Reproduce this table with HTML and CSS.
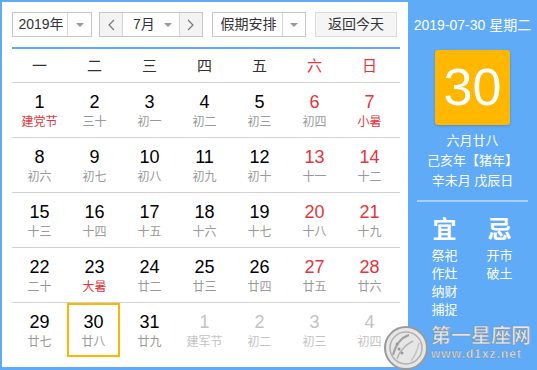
FILE: index.html
```html
<!DOCTYPE html>
<html lang="zh-CN">
<head>
<meta charset="utf-8">
<title>万年历</title>
<link rel="stylesheet" href="styles.css">
</head>
<body>
<div class="frame">
  <div class="main">
    <div class="toolbar">
      <div class="select year">
        <span class="sel-text">2019年</span>
        <span class="sel-arrow"><i class="tri"></i></span>
      </div>
      <div class="select month">
        <span class="nav"><svg width="8" height="12" viewBox="0 0 8 12"><polyline points="7,1 2,6 7,11" fill="none" stroke="#777" stroke-width="1.2"/></svg></span>
        <span class="sel-text mtext"><span>7月</span><i class="tri"></i></span>
        <span class="nav"><svg width="8" height="12" viewBox="0 0 8 12"><polyline points="1,1 6,6 1,11" fill="none" stroke="#777" stroke-width="1.2"/></svg></span>
      </div>
      <div class="select holiday">
        <span class="sel-text">假期安排</span>
        <span class="sel-arrow"><i class="tri"></i></span>
      </div>
      <div class="btn-today">返回今天</div>
    </div>

    <div class="calendar">
      <div class="row head">
        <span>一</span><span>二</span><span>三</span><span>四</span><span>五</span><span class="red">六</span><span class="red">日</span>
      </div>
      <div class="row">
        <div class="cell"><b class="num">1</b><span class="lunar red">建党节</span></div>
        <div class="cell"><b class="num">2</b><span class="lunar">三十</span></div>
        <div class="cell"><b class="num">3</b><span class="lunar">初一</span></div>
        <div class="cell"><b class="num">4</b><span class="lunar">初二</span></div>
        <div class="cell"><b class="num">5</b><span class="lunar">初三</span></div>
        <div class="cell wk"><b class="num">6</b><span class="lunar">初四</span></div>
        <div class="cell wk"><b class="num">7</b><span class="lunar red">小暑</span></div>
      </div>
      <div class="row">
        <div class="cell"><b class="num">8</b><span class="lunar">初六</span></div>
        <div class="cell"><b class="num">9</b><span class="lunar">初七</span></div>
        <div class="cell"><b class="num">10</b><span class="lunar">初八</span></div>
        <div class="cell"><b class="num">11</b><span class="lunar">初九</span></div>
        <div class="cell"><b class="num">12</b><span class="lunar">初十</span></div>
        <div class="cell wk"><b class="num">13</b><span class="lunar">十一</span></div>
        <div class="cell wk"><b class="num">14</b><span class="lunar">十二</span></div>
      </div>
      <div class="row">
        <div class="cell"><b class="num">15</b><span class="lunar">十三</span></div>
        <div class="cell"><b class="num">16</b><span class="lunar">十四</span></div>
        <div class="cell"><b class="num">17</b><span class="lunar">十五</span></div>
        <div class="cell"><b class="num">18</b><span class="lunar">十六</span></div>
        <div class="cell"><b class="num">19</b><span class="lunar">十七</span></div>
        <div class="cell wk"><b class="num">20</b><span class="lunar">十八</span></div>
        <div class="cell wk"><b class="num">21</b><span class="lunar">十九</span></div>
      </div>
      <div class="row">
        <div class="cell"><b class="num">22</b><span class="lunar">二十</span></div>
        <div class="cell"><b class="num">23</b><span class="lunar red">大暑</span></div>
        <div class="cell"><b class="num">24</b><span class="lunar">廿二</span></div>
        <div class="cell"><b class="num">25</b><span class="lunar">廿三</span></div>
        <div class="cell"><b class="num">26</b><span class="lunar">廿四</span></div>
        <div class="cell wk"><b class="num">27</b><span class="lunar">廿五</span></div>
        <div class="cell wk"><b class="num">28</b><span class="lunar">廿六</span></div>
      </div>
      <div class="row">
        <div class="cell"><b class="num">29</b><span class="lunar">廿七</span></div>
        <div class="cell today"><b class="num">30</b><span class="lunar">廿八</span></div>
        <div class="cell"><b class="num">31</b><span class="lunar">廿九</span></div>
        <div class="cell other"><b class="num">1</b><span class="lunar">建军节</span></div>
        <div class="cell other"><b class="num">2</b><span class="lunar">初二</span></div>
        <div class="cell other"><b class="num">3</b><span class="lunar">初三</span></div>
        <div class="cell other"><b class="num">4</b><span class="lunar">初四</span></div>
      </div>
    </div>
  </div>

  <div class="side">
    <div class="side-date">2019-07-30 星期二</div>
    <div class="big-day">30</div>
    <div class="side-lunar">
      <div>六月廿八</div>
      <div>己亥年【猪年】</div>
      <div>辛未月 戊辰日</div>
    </div>
    <div class="side-sep"></div>
    <div class="yiji">
      <div class="yj-col">
        <div class="yj-title">宜</div>
        <div class="yj-items"><div>祭祀</div><div>作灶</div><div>纳财</div><div>捕捉</div></div>
      </div>
      <div class="yj-col">
        <div class="yj-title">忌</div>
        <div class="yj-items"><div>开市</div><div>破土</div></div>
      </div>
    </div>
  </div>

  <div class="watermark">
    <svg class="wm-logo" width="46" height="46" viewBox="0 0 46 46">
      <circle cx="23" cy="23" r="21" fill="#e6e6e6" stroke="#9a9a9a" stroke-width="2"/>
      <circle cx="23" cy="23" r="16" fill="none" stroke="#b0b0b0" stroke-width="1.5"/>
      <path d="M10 30 Q14 14 26 10" fill="none" stroke="#a0a0a0" stroke-width="2"/>
      <path d="M14 34 Q18 22 30 16" fill="none" stroke="#b4b4b4" stroke-width="1.5"/>
      <circle cx="16" cy="24" r="1.5" fill="#999"/>
      <circle cx="19" cy="28" r="1.5" fill="#999"/>
      <circle cx="14" cy="19" r="1.5" fill="#999"/>
      <path d="M28 36 Q34 28 36 18" fill="none" stroke="#c4c4c4" stroke-width="1.5"/>
    </svg>
    <div class="wm-text">
      <div class="wm-cn">第一星座网</div>
      <div class="wm-en">www.d1xz.net</div>
    </div>
  </div>
</div>
</body>
</html>
```

FILE: styles.css
```css
* { box-sizing: border-box; margin: 0; padding: 0; }

body {
  margin: 0;
  width: 537px;
  height: 370px;
  overflow: hidden;
  background: #fff;
  font-family: "Liberation Sans", "Noto Sans CJK SC", sans-serif;
}

.frame {
  position: relative;
  display: flex;
  width: 537px;
  height: 370px;
}

.main {
  width: 408px;
  height: 370px;
  background: #fff;
  border-top: 2px solid #5fabf8;
  border-left: 2px solid #5fabf8;
  border-bottom: 3px solid #5fabf8;
  padding: 10px 8px 10px 10px;
}

/* toolbar */
.toolbar {
  display: flex;
  height: 25px;
  margin-bottom: 10px;
}

.select {
  display: flex;
  height: 25px;
  border: 1px solid #c6c6c6;
  background: #fff;
  color: #333;
  font-size: 14px;
  white-space: nowrap;
}

.sel-text {
  display: flex;
  align-items: center;
  justify-content: center;
  line-height: 23px;
  white-space: nowrap;
}

.sel-arrow {
  display: flex;
  align-items: center;
  justify-content: center;
  border-left: 1px solid #d6d6d6;
}

.tri {
  display: inline-block;
  flex: none;
  width: 0;
  height: 0;
  border-left: 4px solid transparent;
  border-right: 4px solid transparent;
  border-top: 4px solid #9a9a9a;
}

.year { width: 80px; }
.year .sel-text { width: 54px; padding-left: 2px; }
.year .sel-arrow { width: 24px; }

.month { width: 104px; margin-left: 7px; }
.nav {
  display: flex;
  align-items: center;
  justify-content: center;
  width: 22px;
  background: #f3f3f3;
}
.mtext {
  width: 58px;
  border-left: 1px solid #d6d6d6;
  border-right: 1px solid #d6d6d6;
  justify-content: space-between;
  padding-left: 10px;
  padding-right: 7px;
}

.holiday { width: 94px; margin-left: 9px; }
.holiday .sel-text { width: 69px; padding-left: 2px; }
.holiday .sel-arrow { width: 23px; }

.btn-today {
  width: 82px;
  height: 25px;
  margin-left: 9px;
  border: 1px solid #dadada;
  background: #f5f5f5;
  color: #333;
  font-size: 14px;
  line-height: 23px;
  text-align: center;
  white-space: nowrap;
}

/* calendar */
.calendar {
  width: 388px;
  border-top: 2px solid #5fabf8;
}

.row {
  display: grid;
  grid-template-columns: repeat(7, 55px);
  height: 55px;
  border-top: 1px solid #d2d2d2;
}

.row.head {
  height: 33px;
  border-top: none;
  align-items: center;
  color: #333;
  font-size: 15px;
  text-align: center;
  line-height: 33px;
}

.cell {
  display: flex;
  flex-direction: column;
  align-items: center;
  height: 54px;
  padding-top: 9px;
}

.num {
  font-family: "Liberation Sans", sans-serif;
  font-weight: normal;
  font-size: 18px;
  line-height: 20px;
  color: #000;
}

.lunar {
  font-size: 12px;
  line-height: 20px;
  color: #999;
  white-space: nowrap;
}

.red { color: #e8333a; }
.lunar.red { color: #e8333a; }
.cell.wk .num { color: #e8333a; }

.cell.other .num,
.cell.other .lunar { color: #c2c2c2; }

.cell.today {
  width: 53px;
  border: 2px solid #ffb400;
  padding-top: 7px;
}

/* side panel */
.side {
  width: 129px;
  height: 370px;
  background: #5fabf8;
  color: #fff;
  display: flex;
  flex-direction: column;
  align-items: center;
  padding-top: 17px;
}

.side-date {
  font-size: 14px;
  line-height: 16px;
  white-space: nowrap;
}

.big-day {
  width: 75px;
  height: 75px;
  margin-top: 17px;
  background: #ffb700;
  border-radius: 3px;
  box-shadow: 0 1px 3px rgba(0, 0, 0, 0.18);
  font-family: "Liberation Sans", sans-serif;
  font-size: 52px;
  line-height: 75px;
  text-align: center;
  color: #fff;
}

.side-lunar {
  margin-top: 6px;
  font-size: 13px;
  line-height: 20px;
  text-align: center;
  white-space: nowrap;
}

.side-sep {
  width: 111px;
  height: 2px;
  margin-top: 9px;
  background: #a6cff9;
}

.yiji {
  display: flex;
  width: 111px;
}

.yj-col {
  width: 55px;
  display: flex;
  flex-direction: column;
  align-items: center;
}

.yj-title {
  margin-top: 16px;
  font-size: 24px;
  line-height: 24px;
  font-weight: bold;
}

.yj-items {
  margin-top: 5px;
  font-size: 13px;
  line-height: 18px;
}

/* watermark overlay */
.watermark {
  position: absolute;
  left: 383px;
  top: 325px;
  display: flex;
  align-items: flex-start;
  gap: 2px;
}

.wm-logo { display: block; }

.wm-cn {
  font-size: 20px;
  line-height: 22px;
  font-weight: bold;
  color: #dfe8f3;
  -webkit-text-stroke: 0.6px #8a9099;
}

.wm-en {
  font-family: "Liberation Sans", sans-serif;
  font-size: 12px;
  line-height: 14px;
  font-weight: bold;
  color: #dfe8f3;
  -webkit-text-stroke: 0.4px #7a828c;
  letter-spacing: 1px;
}
```
